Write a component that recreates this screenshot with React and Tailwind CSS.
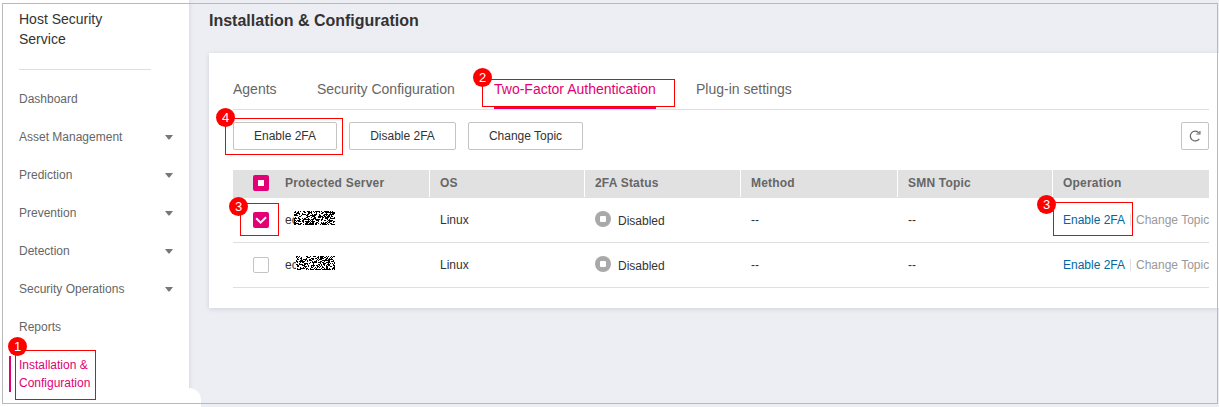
import React from 'react';

const navItems = [
  { label: 'Dashboard' },
  { label: 'Asset Management', expandable: true },
  { label: 'Prediction', expandable: true },
  { label: 'Prevention', expandable: true },
  { label: 'Detection', expandable: true },
  { label: 'Security Operations', expandable: true },
  { label: 'Reports' },
];

const rows = [
  { server: 'ec', checked: true, maskLeft: 'left-[9px]', maskWidth: 41, seed: 7 },
  { server: 'ec', checked: false, maskLeft: 'left-[11px]', maskWidth: 39, seed: 31 },
];

const columns = 'grid grid-cols-[52px_144px_155px_156px_157px_155px_157px]';

// Scrambled black and white pixels that hide the server name.
function Mask({ width, seed }) {
  let value = seed * 7919;
  let d = '';
  for (let y = 0; y < 14; y += 1) {
    for (let x = 0; x < width; x += 1) {
      value ^= value << 13;
      value ^= value >>> 17;
      value ^= value << 5;
      if ((value >>> 8) % 100 < 52) d += `M${x} ${y}h1v1h-1z`;
    }
  }
  return (
    <svg width={width} height="14" shapeRendering="crispEdges" className="block bg-white">
      <path d={d} fill="#000" />
    </svg>
  );
}

function Callout({ number, box, badge }) {
  return (
    <>
      <div className={`absolute border border-[#ff0000] ${box}`} />
      <div className={`absolute flex size-[19px] items-center justify-center rounded-full bg-[#ff0000] text-[13px] leading-none text-white ${badge}`}>
        {number}
      </div>
    </>
  );
}

function Checkbox({ state }) {
  if (state === 'empty') {
    return <span className="block size-4 rounded-[2px] border border-[#c4c4c4] bg-white" />;
  }
  return (
    <span className="flex size-4 items-center justify-center rounded-[2px] bg-[#e20074]">
      {state === 'mixed' ? (
        <span className="size-1.5 bg-white" />
      ) : (
        <svg width="16" height="16" viewBox="0 0 16 16" fill="none" stroke="#fff" strokeWidth="2">
          <path d="M3.2 6.3 7.6 10.6 13 5.2" />
        </svg>
      )}
    </span>
  );
}

function Button({ children, width }) {
  return (
    <button className={`flex h-7 items-center justify-center rounded-[2px] border border-[#c4c4c4] bg-white text-xs text-[#333] ${width}`}>
      {children}
    </button>
  );
}

function HeadCell({ children }) {
  return <div className="h-[27px] border-l border-white pl-[10px] leading-[26px]">{children}</div>;
}

function Sidebar() {
  return (
    <aside className="relative h-[407px] w-[189px] shrink-0 bg-white shadow-[0_0_5px_rgba(0,0,0,0.12)]">
      <h2 className="pt-[9px] pl-[19px] text-sm leading-5 text-[#333]">
        Host Security
        <br />
        Service
      </h2>
      <div className="mt-5 ml-[19px] h-px w-[132px] bg-[#dfdfdf]" />
      <nav className="mt-[10px] text-xs text-[#666]">
        {navItems.map((item) => (
          <div key={item.label} className="flex h-[38px] items-center justify-between pr-4 pl-[19px]">
            <span>{item.label}</span>
            {item.expandable && (
              <svg width="8" height="5" viewBox="0 0 8 5" fill="#777">
                <path d="M0 0H8L4.5 4.5H3.5Z" />
              </svg>
            )}
          </div>
        ))}
        <div className="mt-[10px] ml-[9px] border-l-2 border-[#e20074] pl-2 text-xs leading-[18px] text-[#e20074]">
          Installation &amp;
          <br />
          Configuration
        </div>
      </nav>
      <div className="absolute bottom-0 left-[189px] h-[19px] w-3 rounded-tr-[12px] bg-white" />
    </aside>
  );
}

export default function App() {
  return (
    <div className="relative flex h-[407px] w-[1219px] overflow-hidden bg-[#edeef3] font-['Liberation_Sans',Arial,sans-serif]">
      <Sidebar />

      <main className="min-w-0 flex-1 pl-5">
        <h1 className="h-[53px] pt-[11px] text-base leading-5 font-bold text-[#333]">
          Installation &amp; Configuration
        </h1>

        <section className="h-[255px] bg-white pr-[10px] pl-6 shadow-[0_1px_5px_rgba(0,0,0,0.12)]">
          <div className="flex h-[57px] gap-10 border-b border-[#dfdfdf] pt-6 text-sm leading-6 text-[#666]">
            <div className="w-11">Agents</div>
            <div className="w-[137px] whitespace-nowrap">Security Configuration</div>
            <div className="h-8 w-[162px] border-b-2 border-[#e20074] whitespace-nowrap text-[#e20074]">
              Two-Factor Authentication
            </div>
            <div className="whitespace-nowrap">Plug-in settings</div>
          </div>

          <div className="mt-3 flex gap-3">
            <Button width="w-[104px]">Enable 2FA</Button>
            <Button width="w-[107px]">Disable 2FA</Button>
            <Button width="w-[115px]">Change Topic</Button>
            <div className="ml-auto flex size-7 items-center justify-center rounded-[2px] border border-[#c4c4c4]">
              <svg width="12" height="12" viewBox="0 0 12 12" fill="none" stroke="#666" strokeWidth="1.2">
                <path d="M10.3 8.8A4.9 4.9 0 1 1 9.9 2.8" />
                <path d="M10.9 0.9V4H7.4" />
              </svg>
            </div>
          </div>

          <div className="mt-5 w-[976px] overflow-hidden text-xs whitespace-nowrap text-[#333]">
            <div className={`${columns} h-7 bg-[#e1e1e1] font-bold tracking-[0.2px] text-[#666]`}>
              <div className="pt-[5px] pl-5"><Checkbox state="mixed" /></div>
              <div className="leading-[26px]">Protected Server</div>
              <HeadCell>OS</HeadCell>
              <HeadCell>2FA Status</HeadCell>
              <HeadCell>Method</HeadCell>
              <HeadCell>SMN Topic</HeadCell>
              <HeadCell>Operation</HeadCell>
            </div>

            {rows.map((row) => (
              <div key={row.seed} className={`${columns} h-[45px] grid-rows-[44px] border-b border-[#dfdfdf] leading-[44px]`}>
                <div className="pt-[14px] pl-5"><Checkbox state={row.checked ? 'checked' : 'empty'} /></div>
                <div className="relative">
                  {row.server}
                  <div className={`absolute top-[13px] ${row.maskLeft}`}>
                    <Mask width={row.maskWidth} seed={row.seed} />
                  </div>
                </div>
                <div className="pl-[11px]">Linux</div>
                <div className="flex pl-[11px]">
                  <span className="mt-[13px] mr-[7px] flex size-4 items-center justify-center rounded-full bg-[#a9a9a9]">
                    <span className="size-1.5 rounded-[1px] bg-white" />
                  </span>
                  <span className="pt-px">Disabled</span>
                </div>
                <div className="pl-[11px]">--</div>
                <div className="pl-[11px]">--</div>
                <div className="flex items-center pl-[11px]">
                  <span className="w-[62px] shrink-0 text-[#0067a0]">Enable 2FA</span>
                  <span className="mx-[5px] h-3 w-px shrink-0 bg-[#dfdfdf]" />
                  <span className="text-[#999]">Change Topic</span>
                </div>
              </div>
            ))}
          </div>
        </section>
      </main>

      <div className="pointer-events-none absolute top-[3px] left-[2px] h-[401px] w-[1216px] border border-[#b9b9bd]" />
      <Callout number={1} box="left-[15px] top-[350px] w-[81px] h-[50px]" badge="left-[8px] top-[337px]" />
      <Callout number={2} box="left-[482px] top-[79px] w-[193px] h-[28px]" badge="left-[473px] top-[68px]" />
      <Callout number={4} box="left-[225px] top-[118px] w-[118px] h-[37px]" badge="left-[216px] top-[108px]" />
      <Callout number={3} box="left-[240px] top-[203px] w-[39px] h-[33px]" badge="left-[229px] top-[197px]" />
      <Callout number={3} box="left-[1053px] top-[202px] w-[80px] h-[34px]" badge="left-[1037px] top-[195px]" />
    </div>
  );
}
